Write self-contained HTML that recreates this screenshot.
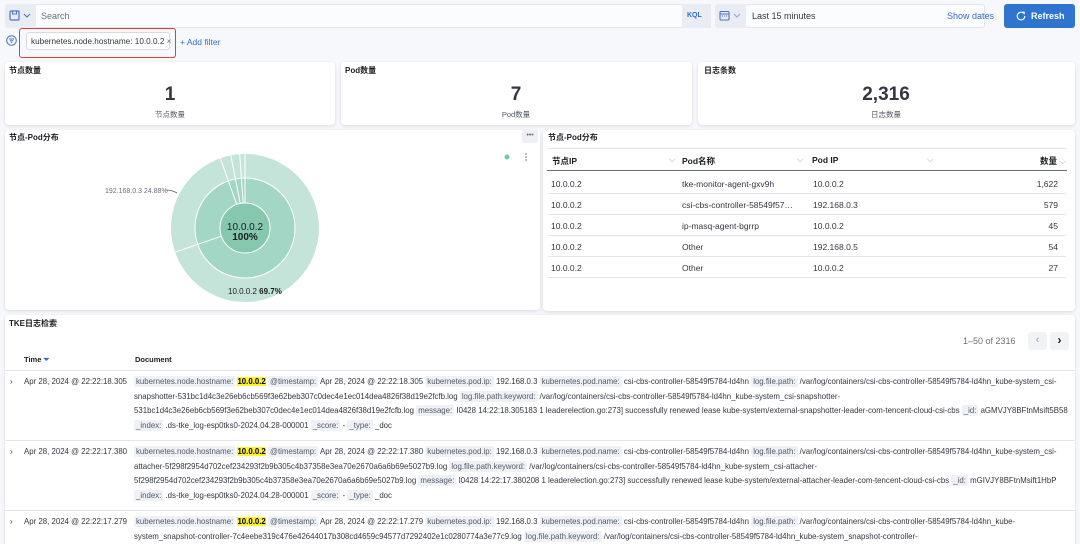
<!DOCTYPE html>
<html><head><meta charset="utf-8"><style>
*{box-sizing:border-box;margin:0;padding:0}
html,body{width:1080px;height:544px;overflow:hidden}
body{background:#f7f8fc;font-family:"Liberation Sans","Noto Sans CJK SC",sans-serif;color:#343741;position:relative}
.a{position:absolute}
.panel{position:absolute;background:#fff;border-radius:4px;box-shadow:0 1px 3px rgba(0,0,0,.12)}
.t{font-size:8px;font-weight:bold;color:#1a1c21}
.tag{background:#eef1f6;border-radius:2px;padding:1px 2px;color:#535966}
.log{font-size:7.85px;line-height:14.6px;color:#343741;white-space:nowrap}
.hl{background:#fff32d;color:#000;font-weight:bold}
.row{position:absolute;left:548px;width:518px;height:22px;border-bottom:1px solid #e3e6ec;font-size:8.5px;color:#343741}
.row span{position:absolute;top:7px}
</style></head><body>
<!-- search bar -->
<div class="a" style="left:5px;top:4px;width:706px;height:24px;background:#fbfcfd;border:1px solid #e3e6ec;border-radius:3px"></div>
<div class="a" style="left:5px;top:4px;width:31px;height:24px;background:#e9edf3;border-radius:3px 0 0 3px"></div>
<svg class="a" style="left:9px;top:10px" width="24" height="12"><rect x="1" y="1" width="9" height="9" rx="1" fill="none" stroke="#4a74c9" stroke-width="1.2"/><rect x="3.5" y="1" width="4" height="3" fill="none" stroke="#4a74c9"/><path d="M15 4l3 3 3-3" fill="none" stroke="#4a74c9" stroke-width="1.1"/></svg>
<div class="a" style="left:41px;top:11px;font-size:9px;color:#69707d">Search</div>
<div class="a" style="left:682px;top:4px;width:29px;height:24px;background:#e9edf3"></div>
<div class="a" style="left:687px;top:12px;font-size:7px;color:#2f6ccf;font-weight:bold">KQL</div>
<div class="a" style="left:715px;top:4px;width:270px;height:24px;background:#fbfcfd;border:1px solid #e3e6ec;border-radius:3px"></div>
<div class="a" style="left:715px;top:4px;width:31px;height:24px;background:#e9edf3;border-radius:3px 0 0 3px"></div>
<svg class="a" style="left:719px;top:10px" width="24" height="12"><rect x="1" y="1.5" width="9" height="8.5" rx="1" fill="none" stroke="#4a74c9" stroke-width="1.1"/><path d="M1 4h9M3 6h1M5 6h1M7 6h1" stroke="#4a74c9"/><path d="M15 4l3 3 3-3" fill="none" stroke="#8fa9d8" stroke-width="1.1"/></svg>
<div class="a" style="left:752px;top:11px;font-size:9px;color:#343741">Last 15 minutes</div>
<div class="a" style="left:947px;top:11px;font-size:9px;color:#2f6ccf">Show dates</div>
<div class="a" style="left:1004px;top:4px;width:71px;height:24px;background:#2f74cf;border-radius:3px"></div>
<svg class="a" style="left:1016px;top:11px" width="10" height="10"><path d="M7.5 2.2A3.8 3.8 0 1 0 8.8 5" fill="none" stroke="#fff" stroke-width="1.1"/><path d="M6 1.2h2.2v2.2" fill="none" stroke="#fff" stroke-width="1.1"/></svg>
<div class="a" style="left:1031px;top:11px;font-size:9px;color:#fff;font-weight:bold">Refresh</div>
<!-- filter row -->
<svg class="a" style="left:6px;top:35px" width="11" height="11"><circle cx="5.5" cy="5.5" r="4.8" fill="none" stroke="#4a74c9"/><path d="M3 4h5M3.8 5.7h3.4M4.7 7.3h1.6" stroke="#4a74c9"/></svg>
<div class="a" style="left:19px;top:28px;width:157px;height:30px;border:1.5px solid #e0402e;border-radius:3px"></div>
<div class="a" style="left:26px;top:32px;width:144px;height:18px;background:#fff;border:1px solid #d3dae6;border-radius:3px"></div>
<div class="a" style="left:31px;top:37px;font-size:8.2px;color:#343741">kubernetes.node.hostname: 10.0.0.2 <span style="color:#69707d">×</span></div>
<div class="a" style="left:180px;top:37px;font-size:8.5px;color:#2f6ccf">+ Add filter</div>
<!-- metrics -->
<div class="panel" style="left:5px;top:62px;width:330px;height:63px"></div>
<div class="panel" style="left:341px;top:62px;width:351px;height:63px"></div>
<div class="panel" style="left:698px;top:62px;width:377px;height:63px"></div>
<div class="a t" style="left:9px;top:65px">节点数量</div>
<div class="a t" style="left:345px;top:65px">Pod数量</div>
<div class="a t" style="left:704px;top:65px">日志条数</div>
<div class="a" style="left:160px;top:84px;width:20px;text-align:center;font-size:19px;font-weight:bold;color:#343741">1</div>
<div class="a" style="left:496px;top:84px;width:40px;text-align:center;font-size:19px;font-weight:bold;color:#343741">7</div>
<div class="a" style="left:836px;top:84px;width:100px;text-align:center;font-size:19px;font-weight:bold;color:#343741">2,316</div>
<div class="a" style="left:140px;top:109px;width:60px;text-align:center;font-size:7.5px;color:#535966">节点数量</div>
<div class="a" style="left:486px;top:109px;width:60px;text-align:center;font-size:7.5px;color:#535966">Pod数量</div>
<div class="a" style="left:856px;top:109px;width:60px;text-align:center;font-size:7.5px;color:#535966">日志数量</div>
<!-- chart panel -->
<div class="panel" style="left:5px;top:130px;width:535px;height:180px"></div>
<div class="a t" style="left:9px;top:132px">节点-Pod分布</div>
<div class="a" style="left:522px;top:130px;width:16px;height:13px;background:#eef0f3;border-radius:2px;font-size:7px;color:#69707d;text-align:center;line-height:11px">•••</div>
<svg class="a" style="left:0;top:0" width="540" height="320">
<circle cx="245" cy="228" r="74" fill="#c4e4da"/>
<circle cx="245" cy="228" r="50" fill="#a3d6c4" stroke="#fff" stroke-width="1"/>
<circle cx="245" cy="228" r="25" fill="#85c8ae" stroke="#fff" stroke-width="1"/>
<g stroke="#fff" stroke-width="1">
<line x1="221.4" y1="236.2" x2="175.1" y2="252.2"/>
<line x1="236.7" y1="204.4" x2="220.3" y2="158.2"/>
<line x1="240.2" y1="203.5" x2="230.8" y2="155.4"/>
<line x1="243.2" y1="203.1" x2="239.7" y2="154.2"/>
<line x1="245" y1="203" x2="245" y2="154"/>
</g>
<path d="M166 190q6 0 11 3" stroke="#555" fill="none" stroke-width=".8"/>
<text x="245" y="230" font-size="10" text-anchor="middle" fill="#1a1c21" font-family="Liberation Sans">10.0.0.2</text>
<text x="245" y="240" font-size="10" font-weight="bold" text-anchor="middle" fill="#1a1c21" font-family="Liberation Sans">100%</text>
<text x="228" y="294" font-size="8" fill="#1a1c21" font-family="Liberation Sans">10.0.0.2 <tspan font-weight="bold">69.7%</tspan></text>
<text x="105" y="193" font-size="7" fill="#69707d" font-family="Liberation Sans">192.168.0.3  24.88%</text>
<circle cx="507" cy="157" r="2.5" fill="#6dcbb0"/>
<circle cx="526" cy="154" r=".8" fill="#69707d"/><circle cx="526" cy="157" r=".8" fill="#69707d"/><circle cx="526" cy="160" r=".8" fill="#69707d"/>
</svg>
<!-- table panel -->
<div class="panel" style="left:543px;top:130px;width:532px;height:181px"></div>
<div class="a t" style="left:548px;top:132px">节点-Pod分布</div>
<div class="a" style="left:547px;top:148px;width:520px;border-top:1px solid #e3e6ec"></div>
<div class="a" style="left:547px;top:149px;width:520px;height:22px;border-bottom:1.5px solid #69707d;font-size:8.5px;font-weight:bold;color:#1a1c21">
<span class="a" style="left:5px;top:6px">节点IP</span><span class="a" style="left:122px;top:5px;color:#98a2b3;font-weight:normal">⌵</span>
<span class="a" style="left:135px;top:6px">Pod名称</span><span class="a" style="left:250px;top:5px;color:#98a2b3;font-weight:normal">⌵</span>
<span class="a" style="left:265px;top:6px">Pod IP</span><span class="a" style="left:380px;top:5px;color:#98a2b3;font-weight:normal">⌵</span>
<span class="a" style="left:493px;top:6px">数量 <span style="color:#98a2b3;font-weight:normal">⌵</span></span></div>
<div class="row" style="top:172px"><span style="left:3px">10.0.0.2</span><span style="left:134px">tke-monitor-agent-gxv9h</span><span style="left:265px">10.0.0.2</span><span style="right:8px">1,622</span></div>
<div class="row" style="top:193px"><span style="left:3px">10.0.0.2</span><span style="left:134px">csi-cbs-controller-58549f57…</span><span style="left:265px">192.168.0.3</span><span style="right:8px">579</span></div>
<div class="row" style="top:214px"><span style="left:3px">10.0.0.2</span><span style="left:134px">ip-masq-agent-bgrrp</span><span style="left:265px">10.0.0.2</span><span style="right:8px">45</span></div>
<div class="row" style="top:235px"><span style="left:3px">10.0.0.2</span><span style="left:134px">Other</span><span style="left:265px">192.168.0.5</span><span style="right:8px">54</span></div>
<div class="row" style="top:256px"><span style="left:3px">10.0.0.2</span><span style="left:134px">Other</span><span style="left:265px">10.0.0.2</span><span style="right:8px">27</span></div>
<!-- log panel -->
<div class="panel" style="left:5px;top:315px;width:1070px;height:240px"></div>
<div class="a t" style="left:9px;top:318px">TKE日志检索</div>
<div class="a" style="left:963px;top:336px;font-size:9px;color:#69707d">1–50 of 2316</div>
<div class="a" style="left:1028px;top:332px;width:19px;height:18px;background:#f1f3f6;border-radius:3px;color:#98a2b3;font-size:11px;text-align:center;line-height:17px">‹</div>
<div class="a" style="left:1050px;top:332px;width:19px;height:18px;background:#f1f3f6;border-radius:3px;color:#1a1c21;font-size:12px;font-weight:bold;text-align:center;line-height:17px">›</div>
<div class="a" style="left:24px;top:355px;font-size:7.5px;font-weight:bold;color:#1a1c21">Time <span style="color:#2f6ccf">⏷</span></div>
<div class="a" style="left:135px;top:355px;font-size:7.5px;font-weight:bold;color:#1a1c21">Document</div>
<div class="a" style="left:5px;top:370px;width:1070px;border-top:1px solid #e3e6ec"></div>
<div class="a" style="left:5px;top:440px;width:1070px;border-top:1px solid #e3e6ec"></div>
<div class="a" style="left:5px;top:510px;width:1070px;border-top:1px solid #e3e6ec"></div>
<div class="a log" style="left:10px;top:375px">›</div>
<div class="a log" style="left:10px;top:445px">›</div>
<div class="a log" style="left:10px;top:515px">›</div>
<div class="a log" style="left:24px;top:375px">Apr 28, 2024 @ 22:22:18.305</div>
<div class="a log" style="left:24px;top:445px">Apr 28, 2024 @ 22:22:17.380</div>
<div class="a log" style="left:24px;top:515px">Apr 28, 2024 @ 22:22:17.279</div>
<div class="a log" style="left:134px;top:375px">
<span class="tag">kubernetes.node.hostname:</span> <span class="hl">10.0.0.2</span> <span class="tag">@timestamp:</span> Apr 28, 2024 @ 22:22:18.305 <span class="tag">kubernetes.pod.ip:</span> 192.168.0.3 <span class="tag">kubernetes.pod.name:</span> csi-cbs-controller-58549f5784-ld4hn <span class="tag">log.file.path:</span> /var/log/containers/csi-cbs-controller-58549f5784-ld4hn_kube-system_csi-<br>
snapshotter-531bc1d4c3e26eb6cb569f3e62beb307c0dec4e1ec014dea4826f38d19e2fcfb.log <span class="tag">log.file.path.keyword:</span> /var/log/containers/csi-cbs-controller-58549f5784-ld4hn_kube-system_csi-snapshotter-<br>
531bc1d4c3e26eb6cb569f3e62beb307c0dec4e1ec014dea4826f38d19e2fcfb.log <span class="tag">message:</span> I0428 14:22:18.305183 1 leaderelection.go:273] successfully renewed lease kube-system/external-snapshotter-leader-com-tencent-cloud-csi-cbs <span class="tag">_id:</span> aGMVJY8BFtnMsift5B58<br>
<span class="tag">_index:</span> .ds-tke_log-esp0tks0-2024.04.28-000001 <span class="tag">_score:</span> - <span class="tag">_type:</span> _doc</div>
<div class="a log" style="left:134px;top:445px">
<span class="tag">kubernetes.node.hostname:</span> <span class="hl">10.0.0.2</span> <span class="tag">@timestamp:</span> Apr 28, 2024 @ 22:22:17.380 <span class="tag">kubernetes.pod.ip:</span> 192.168.0.3 <span class="tag">kubernetes.pod.name:</span> csi-cbs-controller-58549f5784-ld4hn <span class="tag">log.file.path:</span> /var/log/containers/csi-cbs-controller-58549f5784-ld4hn_kube-system_csi-<br>
attacher-5f298f2954d702cef234293f2b9b305c4b37358e3ea70e2670a6a6b69e5027b9.log <span class="tag">log.file.path.keyword:</span> /var/log/containers/csi-cbs-controller-58549f5784-ld4hn_kube-system_csi-attacher-<br>
5f298f2954d702cef234293f2b9b305c4b37358e3ea70e2670a6a6b69e5027b9.log <span class="tag">message:</span> I0428 14:22:17.380208 1 leaderelection.go:273] successfully renewed lease kube-system/external-attacher-leader-com-tencent-cloud-csi-cbs <span class="tag">_id:</span> mGIVJY8BFtnMsift1HbP<br>
<span class="tag">_index:</span> .ds-tke_log-esp0tks0-2024.04.28-000001 <span class="tag">_score:</span> - <span class="tag">_type:</span> _doc</div>
<div class="a log" style="left:134px;top:515px">
<span class="tag">kubernetes.node.hostname:</span> <span class="hl">10.0.0.2</span> <span class="tag">@timestamp:</span> Apr 28, 2024 @ 22:22:17.279 <span class="tag">kubernetes.pod.ip:</span> 192.168.0.3 <span class="tag">kubernetes.pod.name:</span> csi-cbs-controller-58549f5784-ld4hn <span class="tag">log.file.path:</span> /var/log/containers/csi-cbs-controller-58549f5784-ld4hn_kube-<br>
system_snapshot-controller-7c4eebe319c476e42644017b308cd4659c94577d7292402e1c0280774a3e77c9.log <span class="tag">log.file.path.keyword:</span> /var/log/containers/csi-cbs-controller-58549f5784-ld4hn_kube-system_snapshot-controller-</div>
</body></html>
